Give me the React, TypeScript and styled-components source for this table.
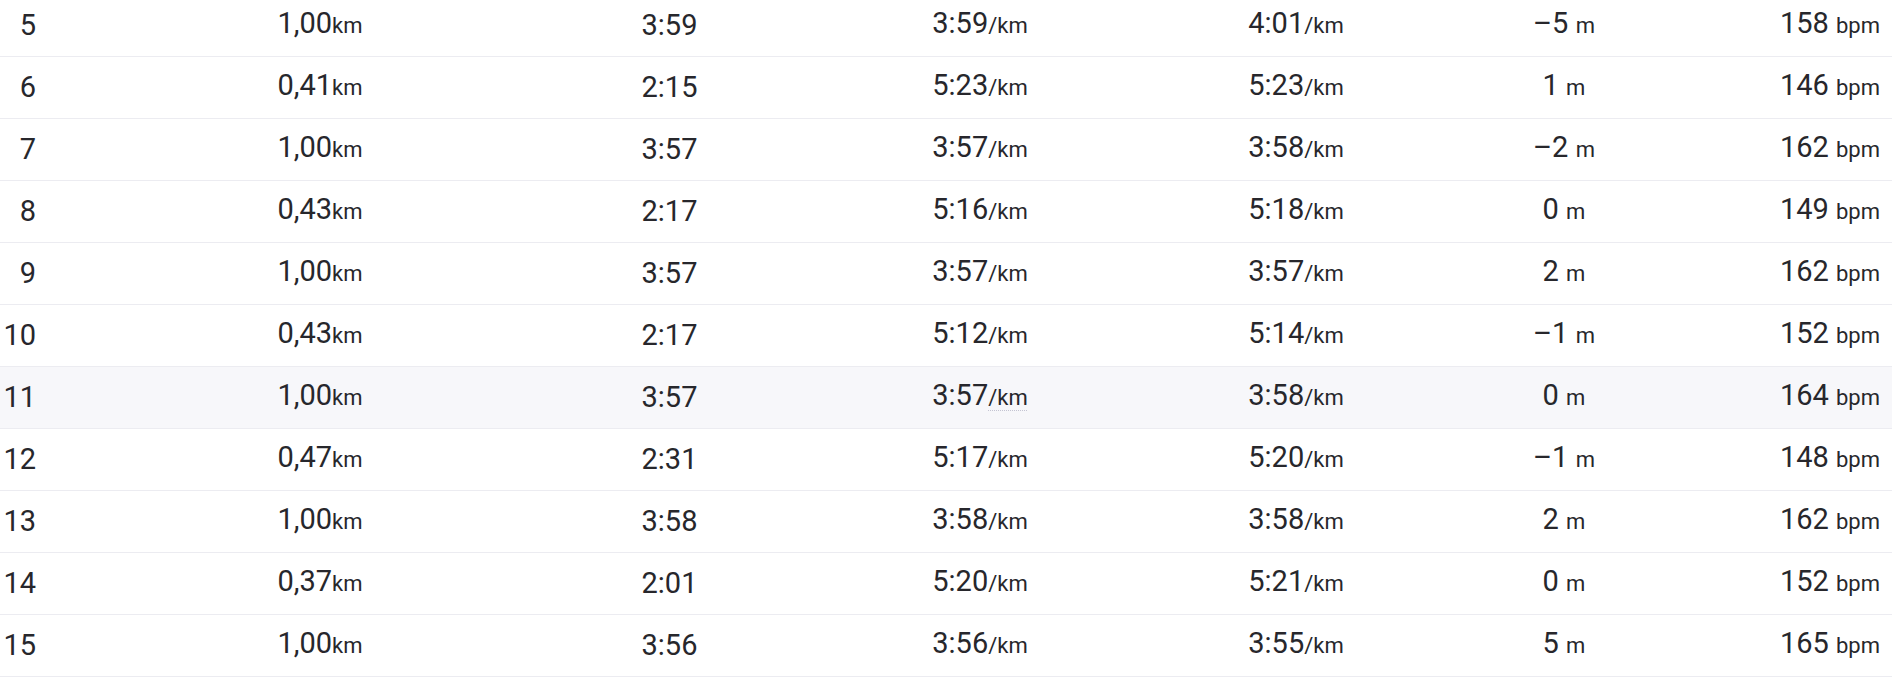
import React from "react";
import styled, { createGlobalStyle } from "styled-components";

const Global = createGlobalStyle`
  html, body { margin: 0; padding: 0; background: #ffffff; }
  body { font-family: Roboto, "Liberation Sans", Arial, sans-serif; color: #27272c; overflow: hidden; }
`;

const Table = styled.div`
  display: flex;
  flex-direction: column;
  margin-top: -5px;
  width: 100%;
`;

const Row = styled.div<{ $hover?: boolean }>`
  display: grid;
  grid-template-columns: 48px 544px 155px 466px 166px 370px 1fr;
  align-items: center;
  box-sizing: border-box;
  height: 62px;
  padding-bottom: 2px;
  border-bottom: 1px solid #ececf1;
  background: ${(p) => (p.$hover ? "#f7f7fa" : "#ffffff")};
`;

const Cell = styled.div<{ $align?: "left" | "center" | "right" }>`
  font-size: 29px;
  line-height: 36px;
  white-space: nowrap;
  text-align: ${(p) => p.$align ?? "center"};
  padding-right: ${(p) => (p.$align === "right" ? "12px" : "0")};
`;

const Unit = styled.span<{ $dotted?: boolean }>`
  font-size: 22px;
  text-decoration: ${(p) => (p.$dotted ? "underline dotted #c4c4d2" : "none")};
  text-underline-offset: 5px;
  text-decoration-thickness: 1px;
`;

type Split = {
  n: number;
  dist: string;
  time: string;
  pace: string;
  gap: string;
  elev: string;
  hr: string;
};

const splits: Split[] = [
  { n: 5, dist: "1,00", time: "3:59", pace: "3:59", gap: "4:01", elev: "–5", hr: "158" },
  { n: 6, dist: "0,41", time: "2:15", pace: "5:23", gap: "5:23", elev: "1", hr: "146" },
  { n: 7, dist: "1,00", time: "3:57", pace: "3:57", gap: "3:58", elev: "–2", hr: "162" },
  { n: 8, dist: "0,43", time: "2:17", pace: "5:16", gap: "5:18", elev: "0", hr: "149" },
  { n: 9, dist: "1,00", time: "3:57", pace: "3:57", gap: "3:57", elev: "2", hr: "162" },
  { n: 10, dist: "0,43", time: "2:17", pace: "5:12", gap: "5:14", elev: "–1", hr: "152" },
  { n: 11, dist: "1,00", time: "3:57", pace: "3:57", gap: "3:58", elev: "0", hr: "164" },
  { n: 12, dist: "0,47", time: "2:31", pace: "5:17", gap: "5:20", elev: "–1", hr: "148" },
  { n: 13, dist: "1,00", time: "3:58", pace: "3:58", gap: "3:58", elev: "2", hr: "162" },
  { n: 14, dist: "0,37", time: "2:01", pace: "5:20", gap: "5:21", elev: "0", hr: "152" },
  { n: 15, dist: "1,00", time: "3:56", pace: "3:56", gap: "3:55", elev: "5", hr: "165" },
];

export default function App() {
  return (
    <>
      <Global />
      <Table>
        {splits.map((s) => {
          const hover = s.n === 11;
          return (
            <Row key={s.n} $hover={hover}>
              <Cell $align="right">{s.n}</Cell>
              <Cell>
                {s.dist}
                <Unit title="kilometers">km</Unit>
              </Cell>
              <Cell>{s.time}</Cell>
              <Cell>
                {s.pace}
                <Unit $dotted={hover} title="per kilometer">/km</Unit>
              </Cell>
              <Cell>
                {s.gap}
                <Unit title="per kilometer">/km</Unit>
              </Cell>
              <Cell>
                {s.elev} <Unit title="meters">m</Unit>
              </Cell>
              <Cell $align="right">
                {s.hr} <Unit title="beats per minute">bpm</Unit>
              </Cell>
            </Row>
          );
        })}
      </Table>
    </>
  );
}
